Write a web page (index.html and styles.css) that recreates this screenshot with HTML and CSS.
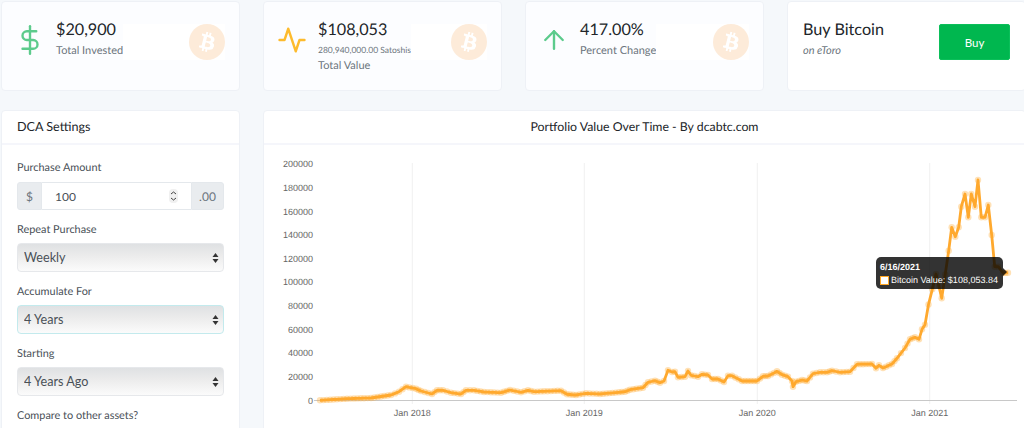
FILE: index.html
```html
<!DOCTYPE html>
<html lang="en">
<head>
  <meta charset="UTF-8" />
  <title>DCA Bitcoin Calculator</title>
  <link rel="stylesheet" href="styles.css">
</head>
<body>
<svg class="defs" width="0" height="0">
  <symbol id="btc" viewBox="0 0 384 512">
    <path fill="#fff" d="M310.204 242.638c27.73-14.18 45.377-39.39 41.28-81.3-5.358-57.351-52.458-76.573-114.85-81.929V0h-48.528v77.203c-12.605 0-25.525.315-38.444.63V0h-48.528v79.409c-17.842.539-38.622.276-97.37 0v51.678c38.314-.678 58.417-3.14 63.023 21.427v217.429c-2.925 19.492-18.524 16.685-53.255 16.071L3.765 443.68c88.481 0 97.37.315 97.37.315V512h48.528v-67.06c13.234.315 26.154.315 38.444.315V512h48.528v-68.005c81.299-4.412 135.647-24.894 142.895-101.467 5.671-61.446-23.32-88.862-69.326-99.89zM150.608 134.553c27.415 0 113.126-8.507 113.126 48.528 0 54.515-85.71 48.212-113.126 48.212v-96.74zm0 251.776V279.821c32.772 0 133.127-9.138 133.127 53.255-.001 60.186-100.355 53.253-133.127 53.253z"/>
  </symbol>
</svg>

<div class="page">
  <div class="card stat">
    <svg class="stat-icon green" viewBox="0 0 24 24"><line x1="12" y1="1" x2="12" y2="23"/><path d="M17 5H9.5a3.5 3.5 0 0 0 0 7h5a3.5 3.5 0 0 1 0 7H6"/></svg>
    <div class="stat-text">
      <div class="stat-value">$20,900</div>
      <div class="stat-label">Total Invested</div>
    </div>
    <div class="stat-fill"><span class="btc"><svg><use href="#btc"/></svg></span></div>
  </div>

  <div class="card stat">
    <svg class="stat-icon yellow" viewBox="0 0 24 24"><polyline points="22 12 18 12 15 21 9 3 6 12 2 12"/></svg>
    <div class="stat-text">
      <div class="stat-value">$108,053</div>
      <div class="stat-small">280,940,000.00 Satoshis</div>
      <div class="stat-label">Total Value</div>
    </div>
    <div class="stat-fill"><span class="btc"><svg><use href="#btc"/></svg></span></div>
  </div>

  <div class="card stat">
    <svg class="stat-icon green" viewBox="0 0 24 24"><line x1="12" y1="19" x2="12" y2="5"/><polyline points="5 12 12 5 19 12"/></svg>
    <div class="stat-text">
      <div class="stat-value">417.00%</div>
      <div class="stat-label">Percent Change</div>
    </div>
    <div class="stat-fill"><span class="btc"><svg><use href="#btc"/></svg></span></div>
  </div>

  <div class="card buy">
    <div class="stat-text">
      <div class="stat-value">Buy Bitcoin</div>
      <div class="stat-label italic">on eToro</div>
    </div>
    <button class="buy-btn">Buy</button>
  </div>

  <div class="card settings">
    <div class="card-head">DCA Settings</div>
    <div class="card-body">
      <label class="field-label">Purchase Amount</label>
      <div class="input-group">
        <span class="addon">$</span>
        <input class="amount" type="text" value="100" />
        <span class="addon">.00</span>
      </div>

      <label class="field-label">Repeat Purchase</label>
      <select class="picker"><option>Weekly</option><option>Monthly</option></select>

      <label class="field-label">Accumulate For</label>
      <select class="picker focused"><option>4 Years</option><option>3 Years</option></select>

      <label class="field-label">Starting</label>
      <select class="picker"><option>4 Years Ago</option><option>3 Years Ago</option></select>

      <label class="field-label">Compare to other assets?</label>
    </div>
  </div>

  <div class="card chart-card">
    <div class="card-head center">Portfolio Value Over Time - By dcabtc.com</div>
    <div class="chart-wrap">
      <svg id="chart" class="chart" viewBox="264 145 761 283"></svg>
      <div class="tooltip">
        <div class="tooltip-date">6/16/2021</div>
        <div class="tooltip-row"><span class="swatch"></span>Bitcoin Value: $108,053.84</div>
      </div>
    </div>
  </div>
</div>

<script src="chart.js"></script>
</body>
</html>
```

FILE: styles.css
```css
html, body { margin: 0; height: 100%; overflow: hidden; }
body { background: #f5f8fb; font-family: "Lato", "Open Sans", sans-serif; color: #212529; text-rendering: geometricPrecision; }
.defs { position: absolute; }
.page { display: grid; grid-template-columns: repeat(4, 239px); column-gap: 23px; row-gap: 19px; padding: 1px 0 0 1px; width: 1024px; height: 428px; box-sizing: border-box; overflow: hidden; align-items: start; }

.card { background: #fff; border: 1px solid #eef1f6; border-radius: 4px; box-sizing: border-box; }

.stat { display: flex; height: 90px; background: #fcfdff; padding: 22px 14px 0 13px; align-items: flex-start; }
.stat-icon { width: 30px; height: 30px; margin: 1px 11px 0 0; flex: none; fill: none; stroke-width: 1.9; stroke-linecap: round; stroke-linejoin: round; }
.stat-icon.green { stroke: #5ccb8c; }
.stat-icon.yellow { stroke: #fdbb2d; }
.stat-text { flex: none; }
.stat-value { font-size: 16.2px; line-height: 12px; height: 16px; }
.stat-label { font-size: 11px; line-height: 16px; color: #6c757d; margin-top: 3px; }
.stat-small { font-size: 8.5px; line-height: 13px; color: #6c757d; margin-top: 4px; }
.stat-small + .stat-label { margin-top: 1px; }
.italic { font-style: italic; }
.stat-fill { flex: 1; display: flex; justify-content: flex-end; background: #fff; height: 36px; }
.btc { width: 36px; height: 36px; border-radius: 50%; background: #fdebd9; display: flex; align-items: center; justify-content: center; }
.btc svg { width: 15px; height: 20px; transform: rotate(14deg); }

.buy { display: flex; height: 90px; justify-content: space-between; padding: 22px 15px 0 15px; align-items: flex-start; }
.buy-btn { width: 71px; height: 36px; background: #00b74f; border: 1px solid #0bbf5a; border-radius: 2px; color: #fff; font-family: inherit; font-size: 11.5px; padding: 0; }

.settings { height: 330px; }
.card-head { height: 32px; line-height: 32px; padding: 0 15px; font-size: 12.6px; border-bottom: 2px solid #f5f6fb; }
.card-head.center { text-align: center; font-size: 12.3px; }
.card-body { padding: 15px 15px 0 15px; }
.field-label { display: block; font-size: 10.9px; line-height: 16px; color: #495057; margin-bottom: 5px; }

.input-group { display: flex; height: 28px; margin: 6px 0 12px; }
.addon { display: flex; align-items: center; justify-content: center; background: #e9ecef; color: #6c757d; font-size: 12px; border: 1px solid #e4e8ec; box-sizing: border-box; border-radius: 3px 0 0 3px; width: 25px; }
.addon:last-child { width: 33px; border-radius: 0 3px 3px 0; }
.amount { flex: 1; min-width: 0; border: 1px solid #e4e8ec; border-width: 1px 0; box-sizing: border-box; padding: 0 0 0 13px; font-family: inherit; font-size: 12px; color: #495057; outline: none; background: #fff url("data:image/svg+xml,%3Csvg xmlns='http://www.w3.org/2000/svg' width='9' height='14'%3E%3Crect width='9' height='14' rx='4' fill='%23f0f0f0'/%3E%3Cpath d='M2 5l2.5-2L7 5M2 9l2.5 2L7 9' fill='none' stroke='%23444' stroke-width='1'/%3E%3C/svg%3E") no-repeat right 13px center; }

.picker { display: block; width: 100%; height: 29px; margin-bottom: 12px; padding: 0 0 0 6px; appearance: none; -webkit-appearance: none; border: 1px solid #e6e8eb; border-radius: 4px; font-family: inherit; font-size: 12.6px; color: #495057; outline: none; background: url("data:image/svg+xml,%3Csvg xmlns='http://www.w3.org/2000/svg' width='7' height='12'%3E%3Cpath d='M3.5 1L6.5 5H.5zM3.5 11L.5 7h6z' fill='%23333'/%3E%3C/svg%3E") no-repeat right 4px center, linear-gradient(#dfe1e3, #ececec 45%, #fbfbfb); }
.picker.focused { border-color: #c3eaed; }

.chart-card { grid-column: span 3; height: 330px; }
.chart-wrap { position: relative; height: 283px; }
.chart { display: block; width: 761px; height: 283px; }
.chart text { font-family: "Liberation Sans", Arial, sans-serif; font-size: 9px; fill: #666; }

.tooltip { position: absolute; left: 612px; top: 112px; width: 127px; height: 32px; box-sizing: border-box; padding: 5px 5px 0 4px; background: rgba(0,0,0,0.8); border-radius: 5px; color: #fff; font-family: "Liberation Sans", Arial, sans-serif; font-size: 9px; line-height: 11px; }
.tooltip::after { content: ""; position: absolute; left: 100%; top: 11px; border: 4px solid transparent; border-left-color: rgba(0,0,0,0.8); }
.tooltip-date { font-weight: bold; margin-bottom: 2px; }
.tooltip-row { display: flex; align-items: center; white-space: nowrap; }
.swatch { width: 7px; height: 7px; background: #fff; border: 1px solid #ffa726; margin-right: 2px; flex: none; }
```

FILE: chart.js
```js
// line traced as [x, y] in page pixels, filled in to one dot per week
const keys = [
  [320,400.3],[347,398.7],[371,398],[391,395],[399,391.7],[406,386.7],[416,388.7],[421,391],[432,394],[437,390.3],[443,390.3],[451,392.7],[461,394],[466,390.3],[474,390.3],[484,392],[501,392.7],[510,390],[521,392.3],[528,390.3],[534,391.7],[561,390.7],[567,394.3],[576,395],[586,393.3],[600,394],
  [625,391.7],[630,389.7],[643,387.7],[648,382.3],[655,380.7],[660,382.7],[664,381],[668,370.3],[672,372],[675,371.7],[678,377.3],[685,376.7],[688,371],[691,375.3],[698,376.7],[702,374.3],[708,375],[712,379],[718,379],[724,382],[728,375.7],[732,375.7],[742,381],[757,381],[763,376.3],[768,376],[777,371.3],[782,374.7],[788,376.7],[792,381],[793,386.7],[796,381.7],[802,380],[807,381],[813,373.7],[820,372.3],[827,372.3],[832,370.7],[840,372.3],[850,371.7],[857,364.3],[872,364],[876,368.3],[879,365.3],[883,368],[892,364],[897,358.3],[905,348],[910,339.3],[915,337.3],[919,339.3],[922,329.3],[925,324.7],[928.5,304.5],
  [936,274],[941.7,298.3],[948.7,250.7],[951.7,227.3],[955.3,236.7],[958.7,227.3],[961.3,206.7],[965,194],[968.3,217.3],[971.3,194],[975,206.7],[978,180],[981.3,217.3],[985,217.3],[988.3,205],[991.7,235],[994.7,266.7],[998.3,266.7],[1003,273],[1008,272.7]
];

const ns = "http://www.w3.org/2000/svg";
const chart = document.getElementById("chart");

function add(tag, attrs, text) {
  const el = document.createElementNS(ns, tag);
  for (const k in attrs) el.setAttribute(k, attrs[k]);
  if (text) el.textContent = text;
  chart.appendChild(el);
  return el;
}

// y axis labels
for (let i = 0; i <= 10; i++) {
  const y = 400.3 - i * 23.63;
  add("text", { x: 313, y: y + 3.3, "text-anchor": "end" }, String(i * 20000));
}

// years
const years = [[412.3, "Jan 2018"], [584.3, "Jan 2019"], [757.3, "Jan 2020"], [929.7, "Jan 2021"]];
years.forEach(([x, label]) => {
  add("line", { x1: x, x2: x, y1: 163, y2: 404, stroke: "#f0f0f0", "stroke-width": 1 });
  add("text", { x: x, y: 416, "text-anchor": "middle" }, label);
});
add("line", { x1: 314, x2: 1017, y1: 400.5, y2: 400.5, stroke: "#c8c8c8", "stroke-width": 1 });

const pts = [];
keys.forEach((p, i) => {
  if (i === 0) { pts.push(p); return; }
  const prev = keys[i - 1];
  const n = Math.max(1, Math.round((p[0] - prev[0]) / 3.3));
  for (let j = 1; j <= n; j++) {
    pts.push([prev[0] + (p[0] - prev[0]) * j / n, prev[1] + (p[1] - prev[1]) * j / n]);
  }
});

add("polyline", {
  points: pts.map(p => p[0].toFixed(1) + "," + p[1].toFixed(1)).join(" "),
  fill: "none", stroke: "#ffa92e", "stroke-width": 2.8, "stroke-linejoin": "round"
});
pts.forEach(p => add("circle", { cx: p[0].toFixed(1), cy: p[1].toFixed(1), r: 3.2, fill: "#ffa92e", "fill-opacity": 0.35 }));
```
